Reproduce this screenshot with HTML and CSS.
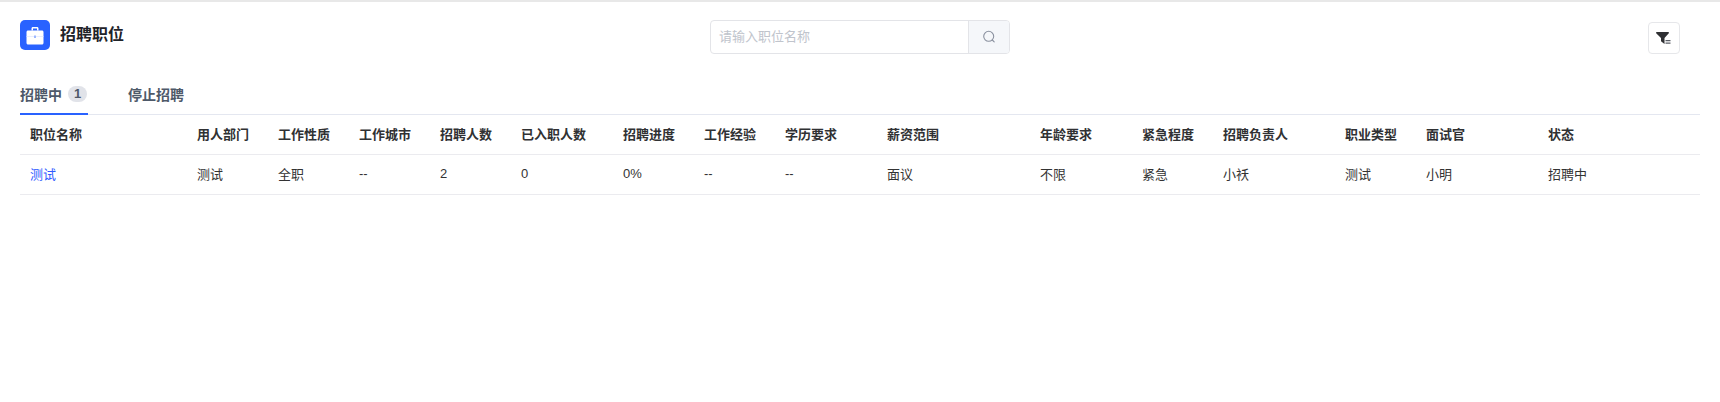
FILE: index.html
```html
<!DOCTYPE html>
<html lang="zh-CN">
<head>
<meta charset="utf-8">
<title>招聘职位</title>
<link rel="stylesheet" href="styles.css">
</head>
<body>
<main class="page">
  <header class="top">
    <div class="brand">
      <span class="brand-icon">
        <svg width="18" height="19" viewBox="0 0 18 19"><path d="M5.500 4.500V2.500C5.500 1.500 6.200 1 7 1h4c.8 0 1.500.5 1.500 1.500v2h-1.500V2.500H7v2z" fill="#fff"/><path d="M2 4.500h14c.8 0 1.500.6 1.500 1.500v11c0 .9-.7 1.500-1.500 1.500H2C1.200 18.500.5 17.900.5 17V6c0-.9.7-1.500 1.500-1.500z" fill="#fff"/><path d="M8 9.500h2v2.500H8z" fill="#9db8ff"/><path d="M.5 10.200h7.500v.8H.5zM10 10.200h7.500v.8H10z" fill="#dfe8ff"/></svg>
      </span>
      <h1 class="title">招聘职位</h1>
    </div>
    <div class="search">
      <span class="search-input">请输入职位名称</span>
      <span class="search-btn">
        <svg width="14" height="14" viewBox="0 0 14 14" fill="none" stroke="#8a919f" stroke-width="1.100"><circle cx="6.700" cy="6.300" r="5"/><path d="M10.300 10l1.900 1.900" stroke-linecap="round"/></svg>
      </span>
    </div>
    <span class="filter-btn">
      <svg class="filter-icon" width="15" height="12" viewBox="0 0 15 12"><path d="M.8 0h11.400c.7 0 1 .6.6 1.200L8.500 6V12L5 9.200V6L.2 1.200C-.2.600.1 0 .8 0z" fill="#2f3033"/><path d="M9.500 8h5v1.200h-5zM9.500 10.500h5v1.200h-5z" fill="#5a5e66"/></svg>
    </span>
  </header>

  <nav class="tabs">
    <span class="tab tab-active">招聘中<span class="count">1</span></span>
    <span class="tab">停止招聘</span>
  </nav>

  <section class="table">
    <div class="row head">
      <span>职位名称</span><span>用人部门</span><span>工作性质</span><span>工作城市</span><span>招聘人数</span><span>已入职人数</span><span>招聘进度</span><span>工作经验</span><span>学历要求</span><span>薪资范围</span><span>年龄要求</span><span>紧急程度</span><span>招聘负责人</span><span>职业类型</span><span>面试官</span><span>状态</span>
    </div>
    <div class="row body-row">
      <span class="link">测试</span><span>测试</span><span>全职</span><span>--</span><span>2</span><span>0</span><span>0%</span><span>--</span><span>--</span><span>面议</span><span>不限</span><span>紧急</span><span>小袄</span><span>测试</span><span>小明</span><span>招聘中</span>
    </div>
  </section>
</main>
</body>
</html>
```
FILE: styles.css
```css
* { box-sizing: border-box; }
html, body { margin: 0; padding: 0; background: #fff; }
body {
  font-family: "Liberation Sans", "Noto Sans CJK SC", sans-serif;
  font-size: 13px;
  color: #333;
}
.page {
  height: 402px;
  padding: 0 20px;
  border-top: 2px solid #e8e8e8;
}
.top {
  display: flex;
  align-items: flex-start;
  height: 69px;
  padding-top: 18px;
}
.brand {
  display: flex;
  align-items: flex-start;
  gap: 10px;
  width: 690px;
}
.brand-icon {
  display: flex;
  align-items: center;
  justify-content: center;
  width: 30px;
  height: 30px;
  border-radius: 5px;
  background: #2962ff;
}
.title {
  margin: 0;
  font-size: 16px;
  line-height: 30px;
  font-weight: 700;
  color: #1f2329;
}
.search {
  display: flex;
  width: 300px;
  height: 34px;
  border: 1px solid #e3e4e8;
  border-radius: 4px;
}
.search-input {
  flex: 1;
  padding-left: 8px;
  line-height: 32px;
  color: #c0c4cc;
}
.search-btn {
  display: flex;
  align-items: center;
  justify-content: center;
  width: 41px;
  background: #f5f7fa;
  border-left: 1px solid #e3e4e8;
  border-radius: 0 3px 3px 0;
}
.filter-btn {
  display: flex;
  align-items: center;
  justify-content: center;
  width: 32px;
  height: 32px;
  margin: 2px 0 0 638px;
  border: 1px solid #e6e7ea;
  border-radius: 4px;
}
.filter-icon { margin-left: -1px; }
.tabs {
  display: flex;
  gap: 40px;
  height: 44px;
  border-bottom: 1px solid #e4e7f0;
}
.tab {
  display: flex;
  align-items: center;
  height: 44px;
  padding-top: 3px;
  border-bottom: 2px solid transparent;
  font-size: 14px;
  font-weight: 700;
  color: #4e5969;
}
.tab-active { width: 68px; border-bottom-color: #2962ff; }
.count {
  width: 19px;
  height: 16px;
  margin-left: 6px;
  border-radius: 8px;
  background: #e1e3e9;
  font-size: 13px;
  line-height: 16px;
  text-align: center;
}
.row {
  display: grid;
  grid-template-columns: 167px repeat(4, 81px) 102px 81px 81px 102px 153px 102px 81px 122px 81px 122px 162px;
  align-items: center;
  height: 40px;
  border-bottom: 1px solid #ebebef;
}
.row span { padding-left: 10px; white-space: nowrap; }
.head { padding-bottom: 3px; font-weight: 700; color: #303133; }
.body-row { padding-bottom: 2px; }
.link { color: #2f5bff; }
```
